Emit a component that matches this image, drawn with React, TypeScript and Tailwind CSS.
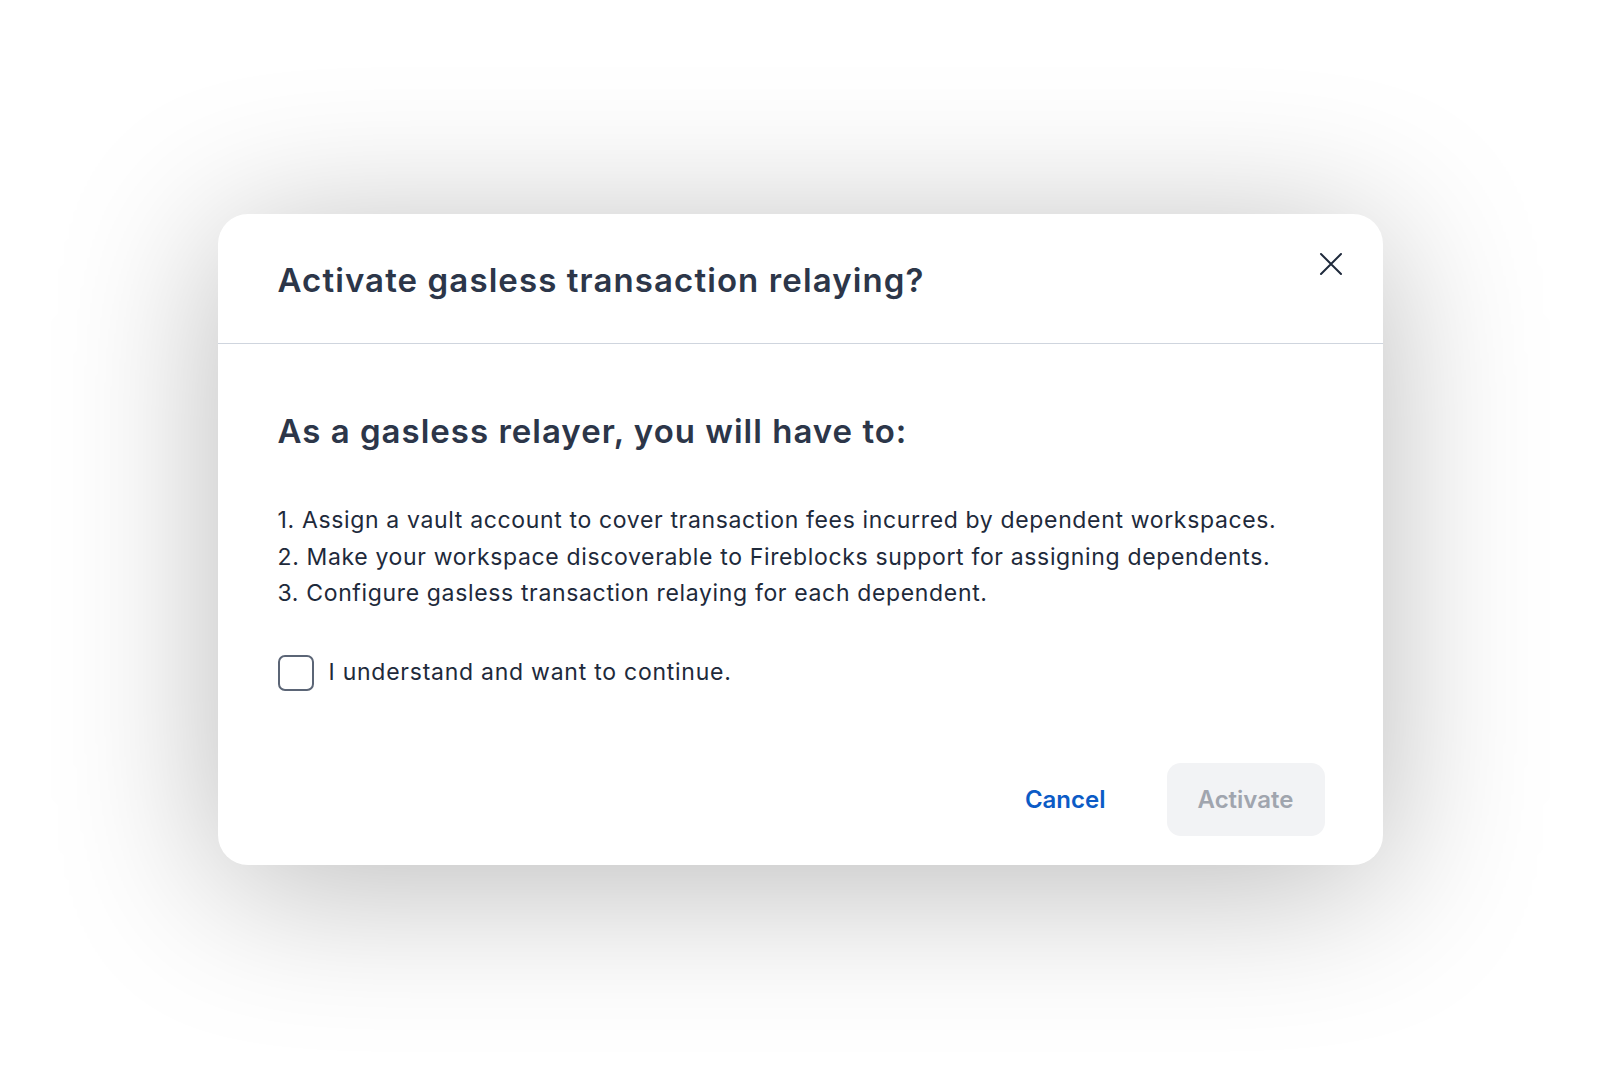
import React from "react";

export default function App() {
  return (
    <div className="min-h-[1087px] w-full bg-white flex justify-center pt-[214px]" style={{ fontFamily: "Inter, 'Open Sans', sans-serif" }}>
      <div className="w-[1165px] h-[651px] bg-white rounded-[30px] shadow-[0_20px_160px_rgba(0,0,0,0.28)] flex flex-col">
        <div className="h-[130px] shrink-0 border-b border-[#cfd5de] flex items-center justify-between pl-[60px] pr-[40px] relative">
          <h1 className="text-[33px] font-semibold text-[#2c3649] tracking-[1.1px] mt-[5px]">Activate gasless transaction relaying?</h1>
          <button className="self-start mt-[38px] w-[24px] h-[24px] flex items-center justify-center text-[#1f2a3c]">
            <svg width="24" height="24" viewBox="0 0 24 24" fill="none" stroke="currentColor" strokeWidth="2" strokeLinecap="round">
              <path d="M2 2 L22 22 M22 2 L2 22" />
            </svg>
          </button>
        </div>
        <div className="flex flex-col flex-1 px-[60px]">
          <h2 className="mt-[67px] text-[33px] font-semibold text-[#2c3649] leading-[40px] tracking-[1px]">As a gasless relayer, you will have to:</h2>
          <div className="mt-[51px] text-[23px] leading-[36.5px] text-[#1e2a3b] tracking-[0.65px]">
            <p>1. Assign a vault account to cover transaction fees incurred by dependent workspaces.</p>
            <p>2. Make your workspace discoverable to Fireblocks support for assigning dependents.</p>
            <p>3. Configure gasless transaction relaying for each dependent.</p>
          </div>
          <label className="mt-[43px] flex items-center gap-[15px]">
            <span className="w-[36px] h-[36px] rounded-[7px] border-2 border-[#5b6576] bg-white"></span>
            <span className="text-[23px] text-[#1e2a3b] tracking-[0.75px]">I understand and want to continue.</span>
          </label>
          <div className="mt-auto mb-[29px] flex items-center justify-end">
            <button className="text-[24px] font-semibold text-[#0b5bc6] mr-[61px]">Cancel</button>
            <button className="w-[158px] h-[73px] rounded-[14px] bg-[#f2f3f5] text-[24px] font-semibold text-[#a0a5ae] mr-[-2px]">Activate</button>
          </div>
        </div>
      </div>
    </div>
  );
}
